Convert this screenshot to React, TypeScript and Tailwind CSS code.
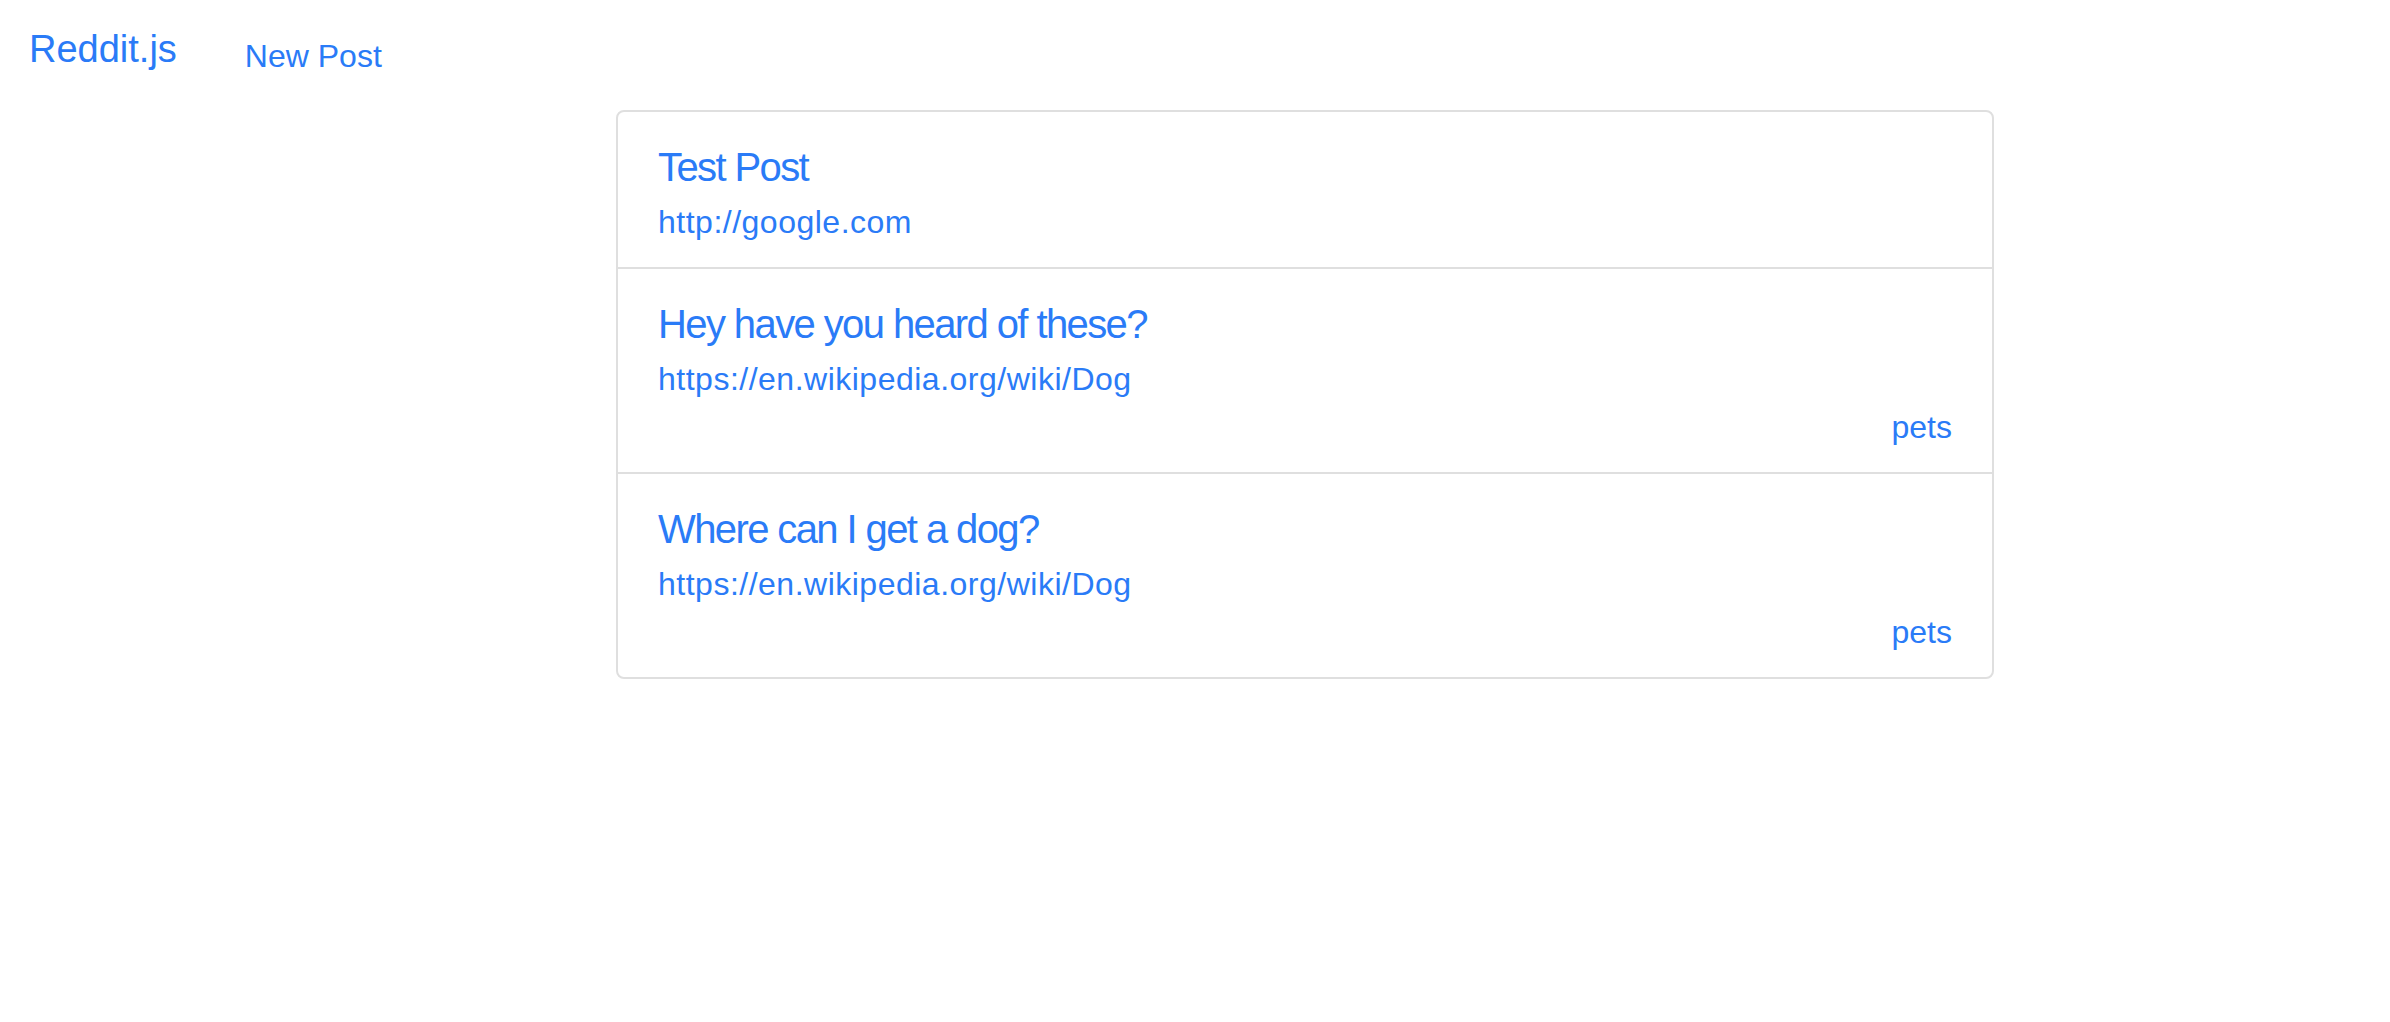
import { useState } from 'react';

interface Post {
  id: number;
  title: string;
  url: string;
  subreddit?: string;
}

const initialPosts: Post[] = [
  { id: 1, title: 'Test Post', url: 'http://google.com' },
  { id: 2, title: 'Hey have you heard of these?', url: 'https://en.wikipedia.org/wiki/Dog', subreddit: 'pets' },
  { id: 3, title: 'Where can I get a dog?', url: 'https://en.wikipedia.org/wiki/Dog', subreddit: 'pets' },
];

function PostItem({ post, first }: { post: Post; first: boolean }) {
  return (
    <li className={`px-10 pt-[31px] pb-[21px] ${first ? '' : 'border-t-2 border-[#dfdfdf]'}`}>
      <h5 className="text-[40px] leading-[48px] tracking-[-1.6px] mb-[7px]">
        <a href="#" className="text-[#2a7bf7]">{post.title}</a>
      </h5>
      <a href="#" className="block text-[32px] leading-[48px] tracking-[0.5px] text-[#2a7bf7]">
        {post.url}
      </a>
      {/* сабреддит справа, если есть */}
      {post.subreddit && (
        <div className="text-right text-[32px] leading-[48px]">
          <a href="#" className="text-[#2a7bf7]">{post.subreddit}</a>
        </div>
      )}
    </li>
  );
}

export default function App() {
  const [posts] = useState<Post[]>(initialPosts);

  return (
    <div className="min-h-screen bg-white font-['Liberation_Sans',Arial,sans-serif] text-[#2a7bf7]">
      {/* Навбар */}
      <nav className="flex items-start pl-[29px] pt-[21px]">
        <a href="#" className="text-[38px] leading-[57px]">Reddit.js</a>
        <a href="#" className="ml-[68px] mt-[11px] text-[32px] leading-[48px]">New Post</a>
      </nav>

      {/* Список постов */}
      <ul className="ml-[616px] mt-[30px] w-[1378px] rounded-lg border-2 border-[#dfdfdf] bg-white">
        {posts.map((post, i) => (
          <PostItem key={post.id} post={post} first={i === 0} />
        ))}
      </ul>
    </div>
  );
}
